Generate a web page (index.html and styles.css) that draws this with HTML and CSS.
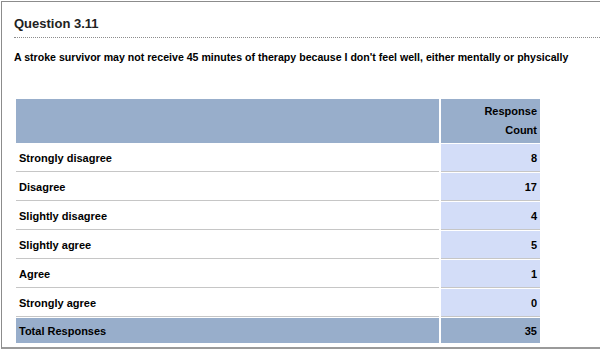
FILE: index.html
```html
<!DOCTYPE html>
<html>
<head>
<meta charset="utf-8">
<link rel="stylesheet" href="styles.css">
</head>
<body>
<div class="frame">
  <h2 class="title">Question 3.11</h2>
  <p class="question">A stroke survivor may not receive 45 minutes of therapy because I don't feel well, either mentally or physically</p>
  <table class="results">
    <thead>
      <tr><th class="label-head"></th><th class="count-head">Response<br>Count</th></tr>
    </thead>
    <tbody>
      <tr><td class="label">Strongly disagree</td><td class="count">8</td></tr>
      <tr><td class="label">Disagree</td><td class="count">17</td></tr>
      <tr><td class="label">Slightly disagree</td><td class="count">4</td></tr>
      <tr><td class="label">Slightly agree</td><td class="count">5</td></tr>
      <tr><td class="label">Agree</td><td class="count">1</td></tr>
      <tr><td class="label">Strongly agree</td><td class="count">0</td></tr>
    </tbody>
    <tfoot>
      <tr><td class="total-label">Total Responses</td><td class="total-count">35</td></tr>
    </tfoot>
  </table>
</div>
</body>
</html>
```

FILE: styles.css
```css
html, body {
  margin: 0;
  padding: 0;
  background: #fff;
  overflow: hidden;
}
body {
  font-family: "Liberation Sans", Arial, Helvetica, sans-serif;
  color: #000;
  width: 600px;
  height: 355px;
}
.frame {
  margin: 1px 0 0 1px;
  width: 586px;
  height: 345px;
  border-top: 1px solid #8c8c8c;
  border-left: 1px solid #8c8c8c;
  border-bottom: 2px solid #9a9a9a;
  padding-left: 12px;
  box-sizing: content-box;
}
.title {
  margin: 0;
  padding-top: 14px;
  padding-bottom: 5px;
  font-size: 13px;
  line-height: 16px;
  font-weight: bold;
  color: #222;
  border-bottom: 1px dotted #8c8c8c;
}
.question {
  margin: 13px 0 0 0;
  font-size: 10.6px;
  line-height: 13px;
  font-weight: bold;
}
.results {
  margin-top: 34px;
  width: 528px;
  border-collapse: separate;
  border-spacing: 2px 1px;
  font-size: 11px;
  font-weight: bold;
}
.results th,
.results td {
  padding: 0 3px;
}
.label-head {
  background: #98aecb;
  height: 44px;
}
.count-head {
  background: #98aecb;
  width: 93px;
  text-align: right;
  line-height: 19px;
  padding-top: 3px;
  padding-bottom: 3px;
}
.label,
.count {
  height: 27px;
  border-bottom: 1px solid #c6c6c6;
  vertical-align: middle;
}
.label {
  padding-left: 4px;
}
.count {
  background: #d3ddf8;
  text-align: right;
}
.total-label,
.total-count {
  background: #98aecb;
  height: 25px;
  padding-top: 0;
  padding-bottom: 0;
}
.total-label {
  padding-left: 9px;
}
.total-count {
  text-align: right;
}
```
